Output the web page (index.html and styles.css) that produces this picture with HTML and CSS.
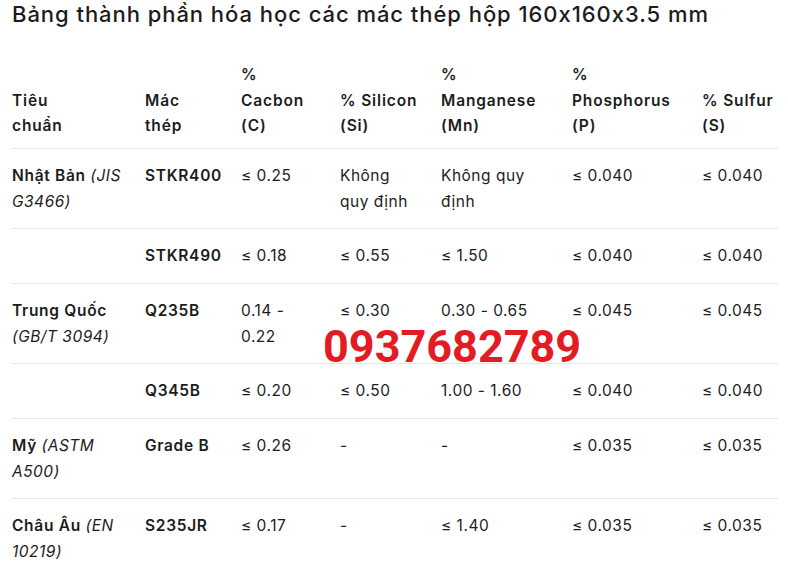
FILE: index.html
```html
<!DOCTYPE html>
<html lang="vi">
<head>
<meta charset="utf-8">
<title>Bảng thành phần hóa học</title>
<link rel="stylesheet" href="styles.css">
</head>
<body>
<div class="page">
  <h1 class="title">Bảng thành phần hóa học các mác thép hộp 160x160x3.5 mm</h1>
  <table class="chem">
    <colgroup>
      <col class="c1"><col class="c2"><col class="c3"><col class="c4"><col class="c5"><col class="c6"><col class="c7">
    </colgroup>
    <thead>
      <tr>
        <th>Tiêu<br>chuẩn</th>
        <th>Mác<br>thép</th>
        <th>%<br>Cacbon<br>(C)</th>
        <th>% Silicon<br>(Si)</th>
        <th>%<br>Manganese<br>(Mn)</th>
        <th>%<br>Phosphorus<br>(P)</th>
        <th>% Sulfur<br>(S)</th>
      </tr>
    </thead>
    <tbody>
      <tr>
        <td>Nhật Bản <em>(JIS<br>G3466)</em></td>
        <td class="grade">STKR400</td>
        <td>≤ 0.25</td>
        <td>Không<br>quy định</td>
        <td>Không quy<br>định</td>
        <td>≤ 0.040</td>
        <td>≤ 0.040</td>
      </tr>
      <tr>
        <td></td>
        <td class="grade">STKR490</td>
        <td>≤ 0.18</td>
        <td>≤ 0.55</td>
        <td>≤ 1.50</td>
        <td>≤ 0.040</td>
        <td>≤ 0.040</td>
      </tr>
      <tr>
        <td>Trung Quốc<br><em>(GB/T 3094)</em></td>
        <td class="grade">Q235B</td>
        <td>0.14 -<br>0.22</td>
        <td>≤ 0.30</td>
        <td>0.30 - 0.65</td>
        <td>≤ 0.045</td>
        <td>≤ 0.045</td>
      </tr>
      <tr>
        <td></td>
        <td class="grade">Q345B</td>
        <td>≤ 0.20</td>
        <td>≤ 0.50</td>
        <td>1.00 - 1.60</td>
        <td>≤ 0.040</td>
        <td>≤ 0.040</td>
      </tr>
      <tr>
        <td>Mỹ <em>(ASTM<br>A500)</em></td>
        <td class="grade">Grade B</td>
        <td>≤ 0.26</td>
        <td>-</td>
        <td>-</td>
        <td>≤ 0.035</td>
        <td>≤ 0.035</td>
      </tr>
      <tr>
        <td>Châu Âu <em>(EN<br>10219)</em></td>
        <td class="grade">S235JR</td>
        <td>≤ 0.17</td>
        <td>-</td>
        <td>≤ 1.40</td>
        <td>≤ 0.035</td>
        <td>≤ 0.035</td>
      </tr>
    </tbody>
  </table>
  <div class="phone">0937682789</div>
</div>
</body>
</html>
```

FILE: styles.css
```css
html, body {
  margin: 0;
  padding: 0;
  background: #ffffff;
}

.page {
  position: relative;
  padding: 0 10px 0 12px;
  font-family: Inter, "Noto Sans", "DejaVu Sans", sans-serif;
  font-feature-settings: "calt" 0;
  color: #1c1c1c;
}

.title {
  margin: 0;
  font-size: 22px;
  line-height: 28px;
  font-weight: 500;
  letter-spacing: 0.95px;
  white-space: nowrap;
}

.chem {
  margin-top: 34px;
  width: 766px;
  border-collapse: collapse;
  table-layout: fixed;
  font-size: 15.5px;
}

.c1 { width: 133px; }
.c2 { width: 96px; }
.c3 { width: 99px; }
.c4 { width: 101px; }
.c5 { width: 131px; }
.c6 { width: 130px; }
.c7 { width: 76px; }

.chem th {
  text-align: left;
  vertical-align: bottom;
  font-weight: 600;
  line-height: 25.5px;
  letter-spacing: 0.85px;
  padding: 0 0 9px 0;
  border-bottom: 1px solid #e6e6e6;
  white-space: nowrap;
}

.chem td {
  vertical-align: top;
  line-height: 26px;
  padding: 14px 0 13.5px 0;
  border-bottom: 1px solid #e6e6e6;
  white-space: nowrap;
  font-weight: 400;
  letter-spacing: 0.5px;
}

.chem td:first-child {
  font-weight: 600;
  letter-spacing: 0.7px;
}

.chem td em {
  font-weight: 400;
  font-style: italic;
  letter-spacing: 0.5px;
}

.chem td.grade {
  font-weight: 600;
  letter-spacing: 0.7px;
}

.phone {
  position: absolute;
  left: 323px;
  top: 324px;
  font-family: Roboto, "Liberation Sans", sans-serif;
  font-weight: 700;
  font-size: 45px;
  line-height: 45px;
  color: #e31b23;
  letter-spacing: 0;
}
```
